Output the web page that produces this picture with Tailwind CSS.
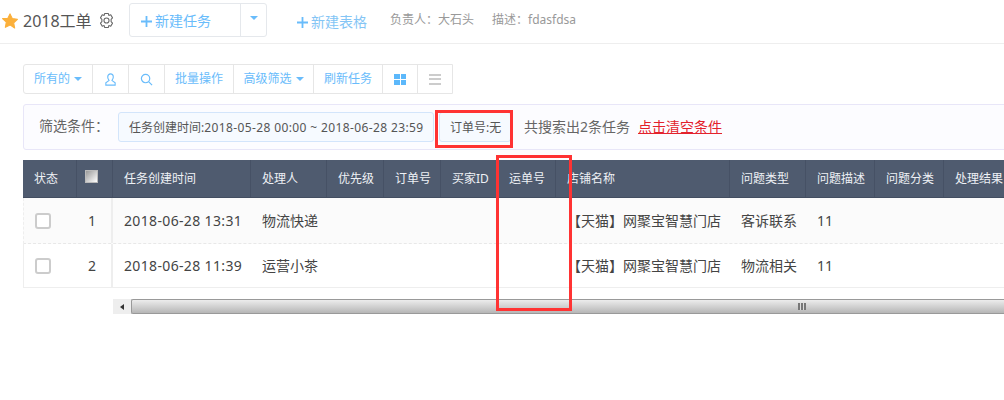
<!DOCTYPE html>
<html lang="zh"><head><meta charset="utf-8"><script src="https://cdn.jsdelivr.net/npm/@tailwindcss/browser@4"></script></head>
<body class="bg-white">
<div class="relative w-[1004px] h-[400px] overflow-hidden bg-white font-['Noto_Sans','Noto_Sans_CJK_SC',sans-serif] text-[#555]">
  <header class="flex items-center h-[44px] border-b border-[#eee]">
    <svg class="ml-[1px] mt-[-1px] w-[18px] h-[18px]" viewBox="0 0 24 24"><path fill="#fbb03b" stroke="#fbb03b" stroke-width="1.500" stroke-linejoin="round" d="M12 2.500l3 6.300 6.900.9-5 4.800 1.300 6.900L12 17.200l-6.200 3.200 1.300-6.900-5-4.800L9 8.800z"/></svg>
    <span class="ml-[4px] mt-[-2px] text-[16px] leading-[20px] text-[#555] w-[75px]">2018工单</span>
    <svg class="w-[17px] h-[17px] mt-[-2px]" viewBox="0 0 24 24" fill="none" stroke="#666" stroke-width="1.500" stroke-linejoin="round"><path d="M9.500 2h5l.8 2.800 2.700-.8 2.500 4.300-2 2.100 0 3.200 2 2.100-2.500 4.300-2.700-.8-.8 2.800h-5l-.8-2.800-2.700.8-2.500-4.300 2-2.100 0-3.200-2-2.100L6 4l2.700.8z"/><circle cx="12" cy="12" r="3.600"/></svg>
    <div class="ml-[14px] mt-[-3px] flex h-[34px] w-[138px] rounded-[3px] border border-[#e5e8ec] text-[#69bcfb]">
      <div class="w-[111px] flex items-center border-r border-[#e5e8ec] pl-[11px]"><svg class="w-[11px] h-[11px] mr-[3px] mt-[3px]" viewBox="0 0 11 11"><path d="M5.500 0v11M0 5.500h11" stroke="#69bcfb" stroke-width="1.800"/></svg><span class="text-[14px]">新建任务</span></div>
      <div class="flex-1 flex items-center justify-center"><span class="w-0 h-0 border-x-[4px] border-x-transparent border-t-[4px] border-t-[#69bcfb] mt-[-4px]"></span></div>
    </div>
    <div class="ml-[30px] mt-[-1px] flex items-center"><svg class="w-[11px] h-[11px] mr-[3px] mt-[3px]" viewBox="0 0 11 11"><path d="M5.500 0v11M0 5.500h11" stroke="#69bcfb" stroke-width="1.800"/></svg><span class="text-[14px] text-[#84c5f5]">新建表格</span></div>
    <span class="ml-[23px] mt-[-4px] text-[12px] text-[#999]">负责人：大石头</span>
    <span class="ml-[18px] mt-[-4px] text-[12px] text-[#999]">描述：fdasfdsa</span>
  </header>

  <div class="ml-[23px] mt-[20px] flex w-[430px] h-[30px] rounded-l-[3px] border border-[#e6e6e6] text-[12px] text-[#69bcfb]">
    <div class="w-[69px] flex items-center justify-center gap-[4px] border-r border-[#e6e6e6]">所有的<span class="w-0 h-0 border-x-[4px] border-x-transparent border-t-[4px] border-t-[#69bcfb]"></span></div>
    <div class="w-[36px] flex items-center justify-center border-r border-[#e6e6e6]"><svg class="w-[13px] h-[13px]" viewBox="0 0 14 14" fill="none" stroke="#69bcfb" stroke-width="1.200"><path d="M7 1c-2 0-3 1.500-3 3.300S5 7 5.500 8L2 10.500V13h10v-2.500L8.500 8C9 7 10 6.100 10 4.300S9 1 7 1z"/></svg></div>
    <div class="w-[36px] flex items-center justify-center border-r border-[#e6e6e6]"><svg class="w-[13px] h-[13px]" viewBox="0 0 14 14" fill="none" stroke="#69bcfb" stroke-width="1.300"><circle cx="6" cy="6" r="4.500"/><path d="M9.500 9.500L13 13"/></svg></div>
    <div class="w-[69px] flex items-center justify-center border-r border-[#e6e6e6]">批量操作</div>
    <div class="w-[80px] flex items-center justify-center gap-[4px] border-r border-[#e6e6e6]">高级筛选<span class="w-0 h-0 border-x-[4px] border-x-transparent border-t-[4px] border-t-[#69bcfb]"></span></div>
    <div class="w-[69px] flex items-center justify-center border-r border-[#e6e6e6]">刷新任务</div>
    <div class="w-[35px] flex items-center justify-center border-r border-[#e6e6e6]"><div class="grid grid-cols-2 gap-[1px] w-[12px] h-[11px]"><i class="bg-[#5cb8fb]"></i><i class="bg-[#5cb8fb]"></i><i class="bg-[#5cb8fb]"></i><i class="bg-[#5cb8fb]"></i></div></div>
    <div class="flex-1 flex items-center justify-center"><div class="flex flex-col gap-[2.500px] w-[12px]"><i class="h-[2px] bg-[#ccc]"></i><i class="h-[2px] bg-[#ccc]"></i><i class="h-[2px] bg-[#ccc]"></i></div></div>
  </div>

  <div class="ml-[23px] mt-[10px] flex items-center w-[1000px] h-[46px] rounded-l-[3px] border border-[#e8e6f8] bg-[#fcfcff]">
    <span class="ml-[15px] w-[79px] text-[14px] leading-[18px] text-[#666] mt-[-2px] whitespace-nowrap">筛选条件：</span>
    <div class="w-[316px] h-[30px] flex items-center pl-[10px] pt-[1px] rounded-[3px] border border-[#d3e5fb] bg-[#f6faff] text-[12px] text-[#555] whitespace-nowrap">任务创建时间:<span class="tracking-[0.38px]">2018-05-28 00:00 ~ 2018-06-28 23:59</span></div>
    <div class="ml-[5px] w-[72px] h-[30px] flex items-center pl-[10px] pt-[1px] rounded-[3px] border border-[#d3e5fb] bg-[#f6faff] text-[12px] text-[#555]">订单号:无</div>
    <span class="ml-[13px] mt-[-1px] text-[14px] text-[#666]">共搜索出2条任务</span>
    <span class="ml-[8px] mt-[-1px] text-[14px] text-[#e3222c] underline">点击清空条件</span>
  </div>

  <div class="ml-[23px] mt-[10px] w-[1000px] text-[12px]">
    <div class="flex h-[38px] bg-[#4f5b6f] text-[#eef1f5] border-b border-[#434e61] [&>div]:flex [&>div]:items-center [&>div]:border-r [&>div]:border-[#465165] [&>div]:pl-[11px] [&>div]:shrink-0">
      <div class="w-[54px]">状态</div>
      <div class="w-[36px]"><span class="w-[13px] h-[13px] ml-[-3px] mt-[-5px] border border-[#bbb] bg-[linear-gradient(135deg,#999,#fff)]"></span></div>
      <div class="w-[138px]">任务创建时间</div>
      <div class="w-[76px]">处理人</div>
      <div class="w-[57px]">优先级</div>
      <div class="w-[57px]">订单号</div>
      <div class="w-[57px]">买家ID</div>
      <div class="w-[58px]">运单号</div>
      <div class="w-[174px]">店铺名称</div>
      <div class="w-[76px]">问题类型</div>
      <div class="w-[69px]">问题描述</div>
      <div class="w-[69px]">问题分类</div>
      <div class="w-[80px]">处理结果</div>
    </div>
    <div class="flex items-center h-[46px] bg-[#fbfbfb] border-l border-[#eee] border-b border-b-[#e8e8e8] border-dashed text-[14px] text-[#444] [&>div]:shrink-0">
      <div class="w-[52px] pl-[11px]"><span class="block w-[16px] h-[16px] rounded-[3px] border-2 border-[#ccc] bg-white"></span></div>
      <div class="w-[37px] pl-[12px] h-full flex items-center border-r-2 border-[#eee]">1</div>
      <div class="w-[138px] pl-[11px] tracking-[0.35px]">2018-06-28 13:31</div>
      <div class="w-[76px] pl-[11px]">物流快递</div>
      <div class="w-[229px]"></div>
      <div class="w-[174px] pl-[11px]">【天猫】网聚宝智慧门店</div>
      <div class="w-[76px] pl-[11px]">客诉联系</div>
      <div class="w-[69px] pl-[11px]">11</div>
    </div>
    <div class="flex items-center h-[44px] bg-white border-l border-[#eee] border-b text-[14px] text-[#444] [&>div]:shrink-0">
      <div class="w-[52px] pl-[11px]"><span class="block w-[16px] h-[16px] rounded-[3px] border-2 border-[#ccc] bg-white"></span></div>
      <div class="w-[37px] pl-[12px] h-full flex items-center border-r-2 border-[#eee]">2</div>
      <div class="w-[138px] pl-[11px] tracking-[0.35px]">2018-06-28 11:39</div>
      <div class="w-[76px] pl-[11px]">运营小茶</div>
      <div class="w-[229px]"></div>
      <div class="w-[174px] pl-[11px]">【天猫】网聚宝智慧门店</div>
      <div class="w-[76px] pl-[11px]">物流相关</div>
      <div class="w-[69px] pl-[11px]">11</div>
    </div>
  </div>

  <div class="ml-[113px] mt-[11px] flex w-[891px] h-[15px] bg-[#eee]">
    <div class="w-[18px] flex items-center justify-center"><span class="w-0 h-0 border-y-[3px] border-y-transparent border-r-[4px] border-r-[#333]"></span></div>
    <div class="flex-1 flex items-center border border-[#999] border-r-0 rounded-l-[2px] bg-[linear-gradient(#ececec,#b6b6b6)]">
      <div class="ml-[666px] flex gap-[1px] h-[7px] bg-[#ddd]"><i class="w-[2px] bg-[#777]"></i><i class="w-[2px] bg-[#777]"></i><i class="w-[2px] bg-[#777]"></i></div>
    </div>
  </div>

  <div class="absolute left-[435px] top-[110px] w-[78px] h-[38px] border-[3px] border-[#f33]"></div>
  <div class="absolute left-[496px] top-[155px] w-[76px] h-[156px] border-[3px] border-[#f33]"></div>
</div>
</body></html>
